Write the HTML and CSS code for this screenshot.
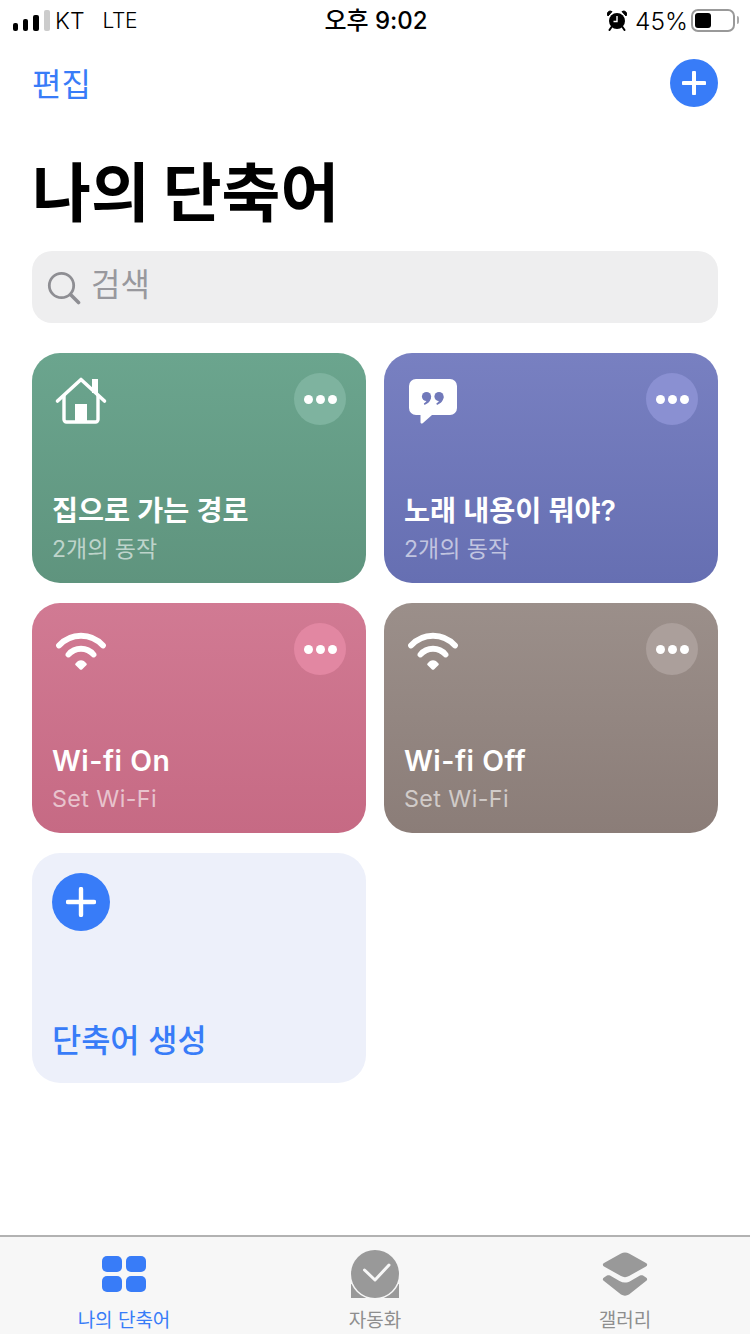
FILE: index.html
```html
<!DOCTYPE html>
<html lang="ko">
<head>
<meta charset="utf-8">
<title>나의 단축어</title>
<link rel="stylesheet" href="styles.css">
</head>
<body>
<div class="app">
  <header class="status">
    <div class="status-left">
      <span class="signal"><i class="bar b1"></i><i class="bar b2"></i><i class="bar b3"></i><i class="bar b4"></i></span>
      <span class="carrier">KT</span>
      <span class="carrier lte">LTE</span>
    </div>
    <div class="clock">오후 9:02</div>
    <div class="status-right">
      <svg class="alarm" width="20" height="21" viewBox="0 0 20 21"><circle cx="10" cy="11" r="8" fill="#000"/><path d="M1 6 L5 1.6 A3 3 0 0 0 1 6Z M19 6 L15 1.6 A3 3 0 0 1 19 6Z" fill="#000" stroke="#000" stroke-width="1"/><path d="M4.5 17 L2.5 20 M15.5 17 L17.5 20" stroke="#000" stroke-width="2" stroke-linecap="round"/><path d="M10 6 V11.5 H6.5" fill="none" stroke="#fff" stroke-width="1.4"/></svg>
      <span class="pct">45%</span>
      <span class="battery"><span class="battery-fill"></span></span>
      <span class="nub"></span>
    </div>
  </header>

  <main class="main">
    <nav class="nav">
      <span class="edit">편집</span>
      <span class="add-btn">
        <svg width="24" height="24" viewBox="0 0 24 24"><path d="M12 1.5V22.5M1.5 12H22.5" stroke="#fff" stroke-width="4" stroke-linecap="round"/></svg>
      </span>
    </nav>
    <h1 class="title">나의 단축어</h1>
    <div class="search">
      <svg class="search-icon" width="34" height="34" viewBox="0 0 34 34"><circle cx="14.5" cy="14.5" r="12.2" fill="none" stroke="#8e8e93" stroke-width="2.8"/><path d="M24 24 L31.5 31.5" stroke="#8e8e93" stroke-width="3.6" stroke-linecap="round"/></svg>
      <span class="search-text">검색</span>
    </div>

    <section class="grid">
      <article class="card green">
        <div class="card-top">
          <svg class="card-icon" width="58" height="52" viewBox="0 0 58 52"><rect x="40" y="6" width="6" height="14" fill="#fff"/><path d="M5.5 28 L29 6.5 L52.5 28" fill="none" stroke="#fff" stroke-width="3.6" stroke-linecap="round" stroke-linejoin="round"/><path d="M12 22 V46.5 A2.5 2.5 0 0 0 14.5 49 H43.5 A2.5 2.5 0 0 0 46 46.5 V22" fill="none" stroke="#fff" stroke-width="3.4"/><rect x="23" y="31" width="12" height="18" fill="#fff"/></svg>
          <span class="more more-green"><i class="dot"></i><i class="dot"></i><i class="dot"></i></span>
        </div>
        <div class="card-text">
          <div class="card-title">집으로 가는 경로</div>
          <div class="card-sub">2개의 동작</div>
        </div>
      </article>

      <article class="card purple">
        <div class="card-top">
          <svg class="card-icon" width="58" height="52" viewBox="0 0 58 52"><path d="M12 6 H46 A7 7 0 0 1 53 13 V35 A7 7 0 0 1 46 42 H28 L19 50 C17.5 51 16.5 50.5 16.5 49 V42 H12 A7 7 0 0 1 5 35 V13 A7 7 0 0 1 12 6Z" fill="#fff"/><g fill="#7179ba"><circle cx="22.5" cy="23.5" r="4.6"/><circle cx="35" cy="23.5" r="4.6"/><path d="M27.1 23.5 C27.1 27.5 24.5 30.5 20.5 32 L19.8 30.6 C22 29.3 22.8 27.8 22.8 26.5Z"/><path d="M39.6 23.5 C39.6 27.5 37 30.5 33 32 L32.3 30.6 C34.5 29.3 35.3 27.8 35.3 26.5Z"/></g></svg>
          <span class="more more-purple"><i class="dot"></i><i class="dot"></i><i class="dot"></i></span>
        </div>
        <div class="card-text">
          <div class="card-title">노래 내용이 뭐야?</div>
          <div class="card-sub">2개의 동작</div>
        </div>
      </article>

      <article class="card pink">
        <div class="card-top">
          <svg class="card-icon" width="58" height="52" viewBox="0 0 58 52"><path d="M7 22.5 C19 9.5 39 9.5 51 22.5" fill="none" stroke="#fff" stroke-width="5.8" stroke-linecap="round"/><path d="M16.5 31.5 C23 23.8 35 23.8 41.5 31.5" fill="none" stroke="#fff" stroke-width="5.8" stroke-linecap="round"/><path d="M23.5 40.5 C26.5 36 31.5 36 34.5 40.5 C35 41.2 34.8 41.8 34.3 42.3 L30 46.4 C29.4 47 28.6 47 28 46.4 L23.7 42.3 C23.2 41.8 23 41.2 23.5 40.5Z" fill="#fff"/></svg>
          <span class="more more-pink"><i class="dot"></i><i class="dot"></i><i class="dot"></i></span>
        </div>
        <div class="card-text">
          <div class="card-title latin">Wi-fi On</div>
          <div class="card-sub latin-sub">Set Wi-Fi</div>
        </div>
      </article>

      <article class="card gray">
        <div class="card-top">
          <svg class="card-icon" width="58" height="52" viewBox="0 0 58 52"><path d="M7 22.5 C19 9.5 39 9.5 51 22.5" fill="none" stroke="#fff" stroke-width="5.8" stroke-linecap="round"/><path d="M16.5 31.5 C23 23.8 35 23.8 41.5 31.5" fill="none" stroke="#fff" stroke-width="5.8" stroke-linecap="round"/><path d="M23.5 40.5 C26.5 36 31.5 36 34.5 40.5 C35 41.2 34.8 41.8 34.3 42.3 L30 46.4 C29.4 47 28.6 47 28 46.4 L23.7 42.3 C23.2 41.8 23 41.2 23.5 40.5Z" fill="#fff"/></svg>
          <span class="more more-gray"><i class="dot"></i><i class="dot"></i><i class="dot"></i></span>
        </div>
        <div class="card-text">
          <div class="card-title latin">Wi-fi Off</div>
          <div class="card-sub latin-sub">Set Wi-Fi</div>
        </div>
      </article>

      <article class="card create">
        <span class="create-btn">
          <svg width="30" height="30" viewBox="0 0 30 30"><path d="M15 2V28M2 15H28" stroke="#fff" stroke-width="4.4" stroke-linecap="round"/></svg>
        </span>
        <div class="create-title">단축어 생성</div>
      </article>
    </section>
  </main>

  <footer class="tabbar">
    <div class="tab tab-active">
      <svg class="tab-icon" width="48" height="48" viewBox="0 0 48 48"><g fill="#387cf8"><rect x="1" y="6" width="20" height="16" rx="5"/><rect x="25" y="6" width="20" height="16" rx="5"/><rect x="1" y="26" width="20" height="16" rx="5"/><rect x="25" y="26" width="20" height="16" rx="5"/></g></svg>
      <span class="tab-label">나의 단축어</span>
    </div>
    <div class="tab">
      <svg class="tab-icon" width="48" height="48" viewBox="0 0 48 48"><rect x="0" y="34" width="48" height="14" fill="#999"/><circle cx="24" cy="24" r="25.5" fill="#f7f7f7"/><circle cx="24" cy="24" r="24" fill="#999"/><path d="M13.5 20 L24 30 L38 15" fill="none" stroke="#f7f7f7" stroke-width="3" stroke-linecap="round" stroke-linejoin="round"/></svg>
      <span class="tab-label">자동화</span>
    </div>
    <div class="tab">
      <svg class="tab-icon" width="48" height="48" viewBox="0 0 48 48"><g fill="#999"><path d="M20 3.5 C22.5 2 25.5 2 28 3.5 L45 13 C46.6 14 46.6 15.5 45 16.5 L28 26 C25.5 27.5 22.5 27.5 20 26 L3 16.5 C1.4 15.5 1.4 14 3 13Z"/><path d="M9 25.5 L18.5 31 C22 33 26 33 29.5 31 L39 25.5 C40 25 41 25 42 25.5 L45 27.5 C46.6 28.5 46.6 30 45 31 L28 44.5 C25.5 46 22.5 46 20 44.5 L3 31 C1.4 30 1.4 28.5 3 27.5 L6 25.5 C7 25 8 25 9 25.5Z"/></g></svg>
      <span class="tab-label">갤러리</span>
    </div>
  </footer>
</div>
</body>
</html>
```
FILE: styles.css
```css
* { box-sizing: border-box; }
html, body { margin: 0; padding: 0; background: #fff; }
body { font-family: "Noto Sans CJK KR", "Noto Sans", sans-serif; color: #000; }
.app { width: 750px; height: 1334px; display: flex; flex-direction: column; overflow: hidden; }

.status { height: 40px; flex: none; display: flex; align-items: center; padding: 0 11px 0 13px; }
.status-left, .status-right { flex: 1; display: flex; align-items: center; }
.status-right { justify-content: flex-end; }
.signal { display: flex; align-items: flex-end; gap: 5px; height: 21px; margin-right: 5px; }
.bar { display: block; width: 5px; background: #000; border-radius: 2px; }
.b1 { height: 8px; }
.b2 { height: 12px; width: 5px; }
.b3 { height: 16px; width: 6px; }
.b4 { height: 21px; width: 6px; background: #ccc; }
.carrier { font-family: Inter, "Liberation Sans", sans-serif; font-size: 23px; font-weight: 300; margin-right: 18px; line-height: 28px; padding-top: 2px; }
.lte { margin-right: 0; font-size: 21px; letter-spacing: -0.3px; }
.clock { font-family: Inter, "Noto Sans CJK KR", sans-serif; font-size: 24px; font-weight: 500; line-height: 40px; padding-top: 1px; white-space: nowrap; }
.alarm { margin-right: 8px; }
.pct { font-family: Inter, "Liberation Sans", sans-serif; font-size: 24.5px; font-weight: 300; line-height: 28px; margin-right: 3px; padding-top: 2px; }
.battery { width: 44px; height: 23px; border: 2px solid #999; border-radius: 7px; padding: 2px; display: block; }
.battery-fill { display: block; width: 16px; height: 100%; background: #000; border-radius: 3px; }
.nub { width: 2px; height: 8px; background: #aaa; margin-left: 2px; border-radius: 0 2px 2px 0; }

.main { flex: 1; padding: 0 32px; display: flex; flex-direction: column; }
.nav { height: 67px; padding-top: 19px; display: flex; justify-content: space-between; align-items: center; flex: none; }
.edit { font-size: 32px; color: #387cf8; line-height: 48px; margin-top: -2px; }
.add-btn { width: 48px; height: 48px; border-radius: 50%; background: #387cf8; display: flex; align-items: center; justify-content: center; }

.title { margin: 0; height: 144px; padding-top: 20px; font-size: 64px; font-weight: 700; line-height: 122px; word-spacing: -5px; white-space: nowrap; flex: none; }

.search { height: 72px; flex: none; background: #eeeeef; border-radius: 20px; display: flex; align-items: center; padding: 0 0 10px 15px; gap: 10px; }
.search-icon { margin-top: 11px; }
.search-text { font-size: 32px; color: #98989d; line-height: 40px; }

.grid { margin-top: 30px; display: grid; grid-template-columns: 334px 334px; grid-auto-rows: 230px; column-gap: 18px; row-gap: 20px; }
.card { border-radius: 28px; padding: 20px; display: flex; flex-direction: column; justify-content: space-between; color: #fff; }
.green { background: linear-gradient(180deg, #6ba58e, #5f947e); }
.purple { background: linear-gradient(180deg, #7880c1, #666fb2); }
.pink { background: linear-gradient(180deg, #d17a93, #c66a84); }
.gray { background: linear-gradient(180deg, #9b8f8a, #8b7d78); }
.create { background: #edf0fa; }

.card-top { display: flex; justify-content: space-between; align-items: flex-start; }
.card-icon { display: block; }
.more { width: 52px; height: 52px; border-radius: 50%; display: flex; align-items: center; justify-content: center; gap: 3px; }
.dot { width: 9px; height: 9px; border-radius: 50%; background: #fff; display: block; }
.more-green { background: #7eb39f; }
.more-purple { background: #8a90d2; }
.more-pink { background: #e287a2; }
.more-gray { background: #ab9f9b; }

.card-text { display: flex; flex-direction: column; margin-bottom: -2px; }
.card-title { font-family: Inter, "Noto Sans CJK KR", sans-serif; font-size: 28.3px; font-weight: 600; line-height: 38px; white-space: nowrap; }
.latin { letter-spacing: 0.5px; }
.card-sub { font-family: Inter, "Noto Sans CJK KR", sans-serif; font-size: 23px; line-height: 32px; color: rgba(255,255,255,.6); margin-top: 3px; white-space: nowrap; }
.latin-sub { font-size: 23.3px; letter-spacing: 0.4px; }

.create-btn { width: 58px; height: 58px; border-radius: 50%; background: #387cf8; display: flex; align-items: center; justify-content: center; }
.create-title { font-size: 31.7px; font-weight: 500; color: #387cf8; line-height: 42px; margin-bottom: 4px; white-space: nowrap; }

.tabbar { height: 99px; flex: none; background: #f7f7f7; border-top: 2px solid #b2b2b2; display: grid; grid-template-columns: repeat(3, 250px); }
.tab { display: flex; flex-direction: column; align-items: center; padding-top: 13px; color: #8e8e8e; }
.tab-active { color: #387cf8; }
.tab-active .tab-label { margin-right: 2px; }
.tab-icon { display: block; }
.tab-label { font-size: 19px; line-height: 26px; margin-top: 8px; white-space: nowrap; }
```
